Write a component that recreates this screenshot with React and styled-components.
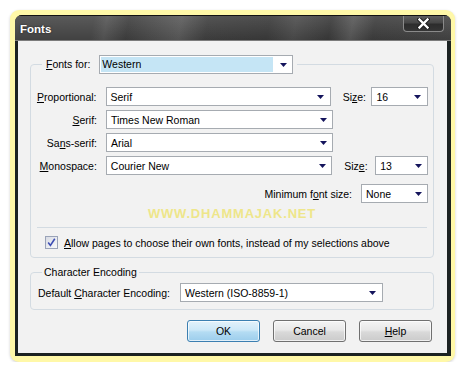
import React from 'react'
import styled, { createGlobalStyle } from 'styled-components'

const GlobalStyle = createGlobalStyle`
  html, body {
    margin: 0;
    background: #fff;
  }
  body {
    font-family: "Liberation Sans", Arial, sans-serif;
    font-size: 10.5px;
    color: #000;
  }
`

const Page = styled.div`
  padding: 10px 0 0 10px;
`

const Glow = styled.div`
  width: 445px;
  height: 352px;
  box-sizing: border-box;
  padding: 5px 4px 6px 5px;
  background: #fff8a8;
  border-radius: 9px;
  box-shadow: 0 1px 3px rgba(0, 0, 0, 0.18);
`

const Window = styled.div`
  height: 341px;
  display: flex;
  flex-direction: column;
  border-radius: 7px 7px 0 0;
  overflow: hidden;
  background: #1c2222;
`

const TitleBar = styled.div`
  height: 26px;
  box-sizing: border-box;
  display: flex;
  align-items: flex-start;
  justify-content: space-between;
  padding: 0 7px 0 5px;
  border-top: 1px solid #111;
  border-bottom: 1px solid #7c7c7c;
  background:
    linear-gradient(to bottom, rgba(255, 255, 255, 0.1), rgba(0, 0, 0, 0.08)),
    linear-gradient(100deg, #474747 0%, #474747 18%, #555 21%, #3f3f3f 26%,
      #4f4f4f 33%, #5a5a5a 38%, #404040 44%, #3b3b3b 58%, #4c4c4c 64%,
      #3a3a3a 72%, #585858 77%, #3e3e3e 82%, #454545 100%);
`

const Title = styled.span`
  margin-top: 7px;
  font-size: 11.5px;
  font-weight: bold;
  color: #fff;
  text-shadow: 0 0 2px rgba(0, 0, 0, 0.6);
`

const CloseButton = styled.div`
  width: 41px;
  height: 16px;
  box-sizing: border-box;
  display: flex;
  align-items: center;
  justify-content: center;
  border: 1px solid #8a8a8a;
  border-top: none;
  border-radius: 0 0 4px 4px;
  background: linear-gradient(to bottom, #5e5e5e 0%, #464646 45%, #2c2c2c 55%, #353535 100%);
`

const Client = styled.div`
  flex: 1;
  margin: 0 4px 3px 3px;
  background: #f2f2f2;
  padding: 14px 13px 0 12px;
  display: flex;
  flex-direction: column;
`

const Group = styled.fieldset`
  margin: ${p => p.$top || 0}px 0 0;
  padding: ${p => p.$pad};
  border: 1px solid #d3dbe2;
  border-radius: 4px;
  min-width: 0;
`

const GroupLegend = styled.legend`
  margin-left: ${p => p.$inset}px;
  padding: 0 ${p => p.$space}px;
  line-height: 13px;
`

const LegendRow = styled.div`
  display: flex;
  align-items: center;
  gap: 9px;
`

const Row = styled.div`
  display: flex;
  align-items: center;
  height: 19px;
  margin-top: ${p => p.$top || 0}px;
  justify-content: ${p => (p.$end ? 'flex-end' : 'flex-start')};
`

const Label = styled.span`
  width: ${p => p.$width}px;
  text-align: right;
  margin-right: 9px;
  white-space: nowrap;
`

const SizeLabel = styled.span`
  margin-left: 12px;
  width: ${p => p.$width}px;
  white-space: nowrap;
`

const PlainLabel = styled.span`
  margin-right: ${p => p.$gap || 9}px;
  white-space: nowrap;
`

const Key = styled.span`
  text-decoration: underline;
  text-underline-offset: 1px;
`

const SelectBox = styled.div`
  display: flex;
  width: ${p => p.$width}px;
  height: 19px;
  box-sizing: border-box;
  border: 1px solid #a6abb1;
  background: #fff;
`

const SelectValue = styled.div`
  flex: 1;
  display: flex;
  align-items: center;
  margin: 1px;
  padding-left: ${p => (p.$highlight ? 1 : 3)}px;
  background: ${p => (p.$highlight ? '#c5e5f5' : 'transparent')};
  white-space: nowrap;
  overflow: hidden;
`

const ArrowBox = styled.div`
  width: 18px;
  display: flex;
  align-items: center;
  justify-content: center;
`

const Watermark = styled.div`
  margin-top: 3px;
  line-height: 15px;
  text-align: center;
  font-size: 13px;
  font-weight: bold;
  letter-spacing: 0.8px;
  color: #eee68a;
`

const Separator = styled.div`
  margin: 6px 1px 0;
  height: 1px;
  background: #d3dbe2;
`

const CheckRow = styled.label`
  display: flex;
  align-items: center;
  height: 13px;
  margin: 8px 0 0 9px;
  gap: 6px;
`

const CheckBox = styled.span`
  width: 13px;
  height: 13px;
  box-sizing: border-box;
  display: flex;
  align-items: center;
  justify-content: center;
  border: 1px solid #9aa3b8;
  background: linear-gradient(135deg, #d8dbe4 0%, #eceef2 60%, #f8f8fa 100%);
`

const ButtonBar = styled.div`
  display: flex;
  justify-content: flex-end;
  gap: 13px;
  margin: 10px 2px 0 0;
`

const Button = styled.button`
  width: 73px;
  height: 22px;
  padding: 0;
  font: inherit;
  color: #000;
  border-radius: 3px;
  border: 1px solid ${p => (p.$primary ? '#3c7fb1' : '#707070')};
  background: ${p =>
    p.$primary
      ? 'linear-gradient(to bottom, #e3f2fb 0%, #cde8f8 45%, #b4dcf3 55%, #9ccdec 100%)'
      : 'linear-gradient(to bottom, #f4f4f4 0%, #e8e8e8 45%, #d9d9d9 55%, #cbcbcb 100%)'};
  box-shadow: inset 0 0 0 1px rgba(255, 255, 255, 0.7);
`

const Arrow = () => (
  <svg width="7" height="4" viewBox="0 0 7 4">
    <polygon points="0,0 7,0 3.5,4" fill="#14145c" />
  </svg>
)

const Select = ({ width, value, highlight }) => (
  <SelectBox $width={width}>
    <SelectValue $highlight={highlight}>{value}</SelectValue>
    <ArrowBox>
      <Arrow />
    </ArrowBox>
  </SelectBox>
)

const fontRows = [
  { label: <><Key>P</Key>roportional:</>, value: 'Serif', size: { label: <>Si<Key>z</Key>e:</>, labelWidth: 29, width: 57, value: '16' } },
  { label: <><Key>S</Key>erif:</>, value: 'Times New Roman' },
  { label: <>Sa<Key>n</Key>s-serif:</>, value: 'Arial' },
  { label: <><Key>M</Key>onospace:</>, value: 'Courier New', size: { label: <>Siz<Key>e</Key>:</>, labelWidth: 31, width: 53, value: '13' } },
]

export default function App() {
  return (
    <Page>
      <GlobalStyle />
      <Glow>
        <Window>
          <TitleBar>
            <Title>Fonts</Title>
            <CloseButton>
              <svg width="13" height="11" viewBox="0 0 13 11">
                <path d="M2.5 1.5 L10.5 9.5 M10.5 1.5 L2.5 9.5" stroke="#1a1a1a" strokeWidth="4.2" strokeLinecap="square" />
                <path d="M2.5 1.5 L10.5 9.5 M10.5 1.5 L2.5 9.5" stroke="#fff" strokeWidth="2.4" strokeLinecap="square" />
              </svg>
            </CloseButton>
          </TitleBar>
          <Client>
            <Group $pad="13px 5px 8px 5px">
              <GroupLegend $inset={6} $space={4}>
                <LegendRow>
                  <span><Key>F</Key>onts for:</span>
                  <Select width={194} value="Western" highlight />
                </LegendRow>
              </GroupLegend>
              {fontRows.map((r, i) => (
                <Row key={i} $top={i ? 4 : 0}>
                  <Label $width={61}>{r.label}</Label>
                  <Select width={227} value={r.value} />
                  {r.size && (
                    <>
                      <SizeLabel $width={r.size.labelWidth}>{r.size.label}</SizeLabel>
                      <Select width={r.size.width} value={r.size.value} />
                    </>
                  )}
                </Row>
              ))}
              <Row $top={9} $end>
                <PlainLabel>Minimum f<Key>o</Key>nt size:</PlainLabel>
                <Select width={67} value="None" />
              </Row>
              <Watermark>WWW.DHAMMAJAK.NET</Watermark>
              <Separator />
              <CheckRow>
                <CheckBox>
                  <svg width="9" height="9" viewBox="0 0 9 9">
                    <path d="M1.2 4.6 L3.4 7.4 L7.8 0.8" fill="none" stroke="#3d4db4" strokeWidth="1.6" />
                  </svg>
                </CheckBox>
                <span><Key>A</Key>llow pages to choose their own fonts, instead of my selections above</span>
              </CheckRow>
            </Group>
            <Group $top={8} $pad="4px 7px 7px 7px">
              <GroupLegend $inset={4} $space={2}>Character Encoding</GroupLegend>
              <Row>
                <PlainLabel $gap={10}>Default <Key>C</Key>haracter Encoding:</PlainLabel>
                <Select width={203} value="Western (ISO-8859-1)" />
              </Row>
            </Group>
            <ButtonBar>
              <Button $primary>OK</Button>
              <Button>Cancel</Button>
              <Button><Key>H</Key>elp</Button>
            </ButtonBar>
          </Client>
        </Window>
      </Glow>
    </Page>
  )
}
